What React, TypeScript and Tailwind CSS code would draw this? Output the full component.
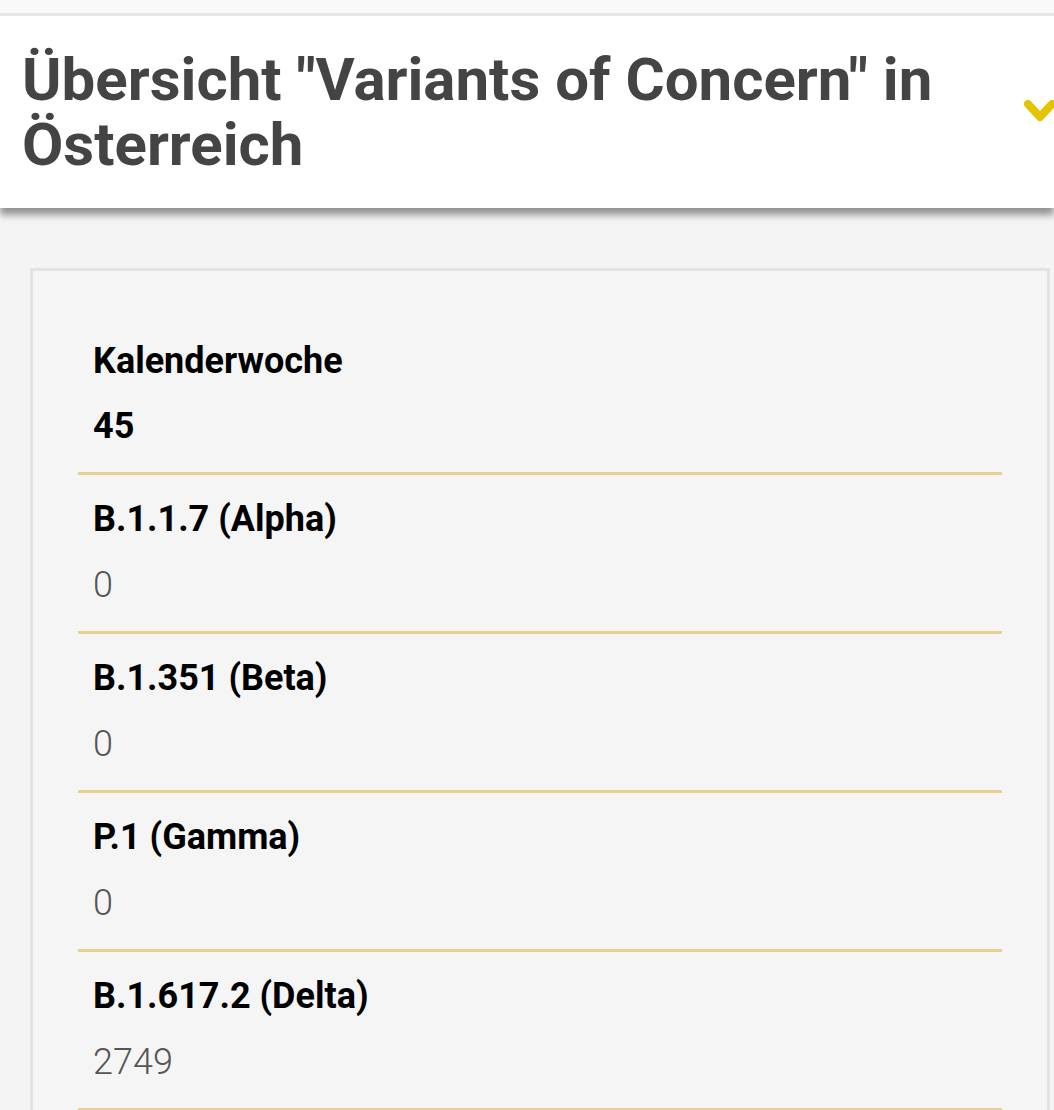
import React from "react";

const rows = [
  { label: "B.1.1.7 (Alpha)", value: "0" },
  { label: "B.1.351 (Beta)", value: "0" },
  { label: "P.1 (Gamma)", value: "0" },
  { label: "B.1.617.2 (Delta)", value: "2749" },
];

export default function App() {
  return (
    <div className="min-h-[1110px] w-[1054px] overflow-hidden bg-[#f4f4f4]" style={{ fontFamily: "Roboto, 'Noto Sans', sans-serif" }}>
      <div className="h-[13px] bg-[#f9f9f9]" />
      <div className="relative border-t-[3px] border-[#e6e6e6] bg-white shadow-[0_7px_7px_0_rgba(0,0,0,0.4)]">
        <div className="pl-[22px] pt-[31px] pb-[31px]">
          <h1 className="text-[60px] font-bold leading-[65px] text-[#444444]">
            Übersicht "Variants of Concern" in<br />Österreich
          </h1>
        </div>
        <svg className="absolute left-[1024px] top-[80px]" width="34" height="32" viewBox="0 0 34 32">
          <path d="M4 8 L16 21 L28 8" fill="none" stroke="#e2c400" strokeWidth="8" strokeLinejoin="round" strokeLinecap="round" />
        </svg>
      </div>
      <div className="ml-[30px] mt-[60px] w-[1020px] border-[3px] border-b-0 border-[#e3e3e3] bg-[#f5f5f5] px-[45px] pt-[69px]">
        <div className="border-b-[3px] border-[#e8d08e] pb-[25px] pl-[15px]">
          <div className="text-[36px] font-bold leading-[42px] text-black">Kalenderwoche</div>
          <div className="mt-[23px] text-[36px] font-bold leading-[42px] text-black">45</div>
        </div>
        {rows.map((r) => (
          <div key={r.label} className="border-b-[3px] border-[#e8d08e] pl-[15px] pt-[23px] pb-[25px]">
            <div className="text-[36px] font-bold leading-[42px] text-black">{r.label}</div>
            <div className="mt-[24px] text-[36px] font-light leading-[42px] text-[#555555]">{r.value}</div>
          </div>
        ))}
      </div>
    </div>
  );
}
